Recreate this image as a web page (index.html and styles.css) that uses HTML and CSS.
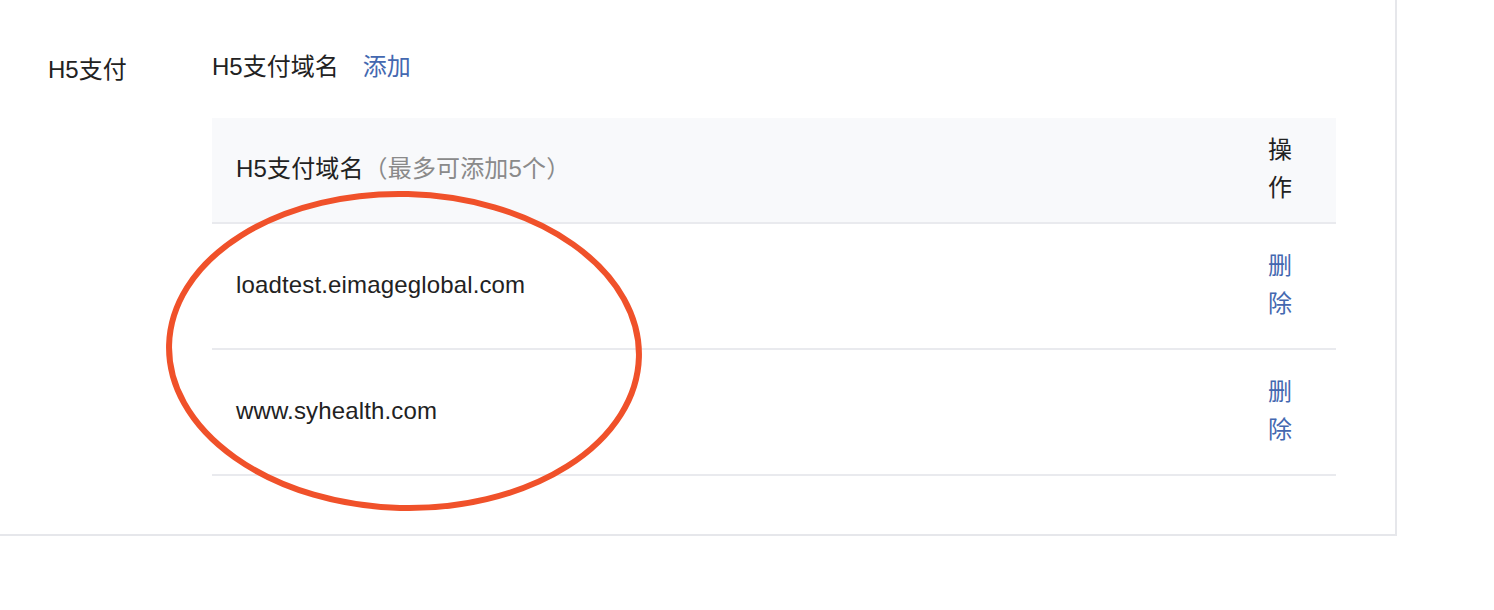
FILE: index.html
```html
<!DOCTYPE html>
<html lang="zh">
<head>
<meta charset="utf-8">
<title>H5支付</title>
<link rel="stylesheet" href="styles.css">
</head>
<body>
<div class="panel">
  <div class="row">
    <div class="label">H5支付</div>
    <div class="content">
      <div class="title-line">
        <span class="title">H5支付域名</span>
        <a class="link add">添加</a>
      </div>
      <table class="domains">
        <colgroup>
          <col class="col-domain">
          <col class="col-op">
        </colgroup>
        <thead>
          <tr>
            <th>H5支付域名<span class="hint">（最多可添加5个）</span></th>
            <th class="op">操作</th>
          </tr>
        </thead>
        <tbody>
          <tr>
            <td>loadtest.eimageglobal.com</td>
            <td class="op"><a class="link">删除</a></td>
          </tr>
          <tr>
            <td>www.syhealth.com</td>
            <td class="op"><a class="link">删除</a></td>
          </tr>
        </tbody>
      </table>
    </div>
  </div>
</div>
<svg class="annotation" width="1494" height="610" viewBox="0 0 1494 610" xmlns="http://www.w3.org/2000/svg">
  <ellipse cx="404" cy="351" rx="235" ry="157" transform="rotate(1.5 404 351)" fill="none" stroke="#f0512a" stroke-width="6"/>
</svg>
</body>
</html>
```

FILE: styles.css
```css
html, body {
  margin: 0;
  padding: 0;
  background: #ffffff;
}

body {
  font-family: "Liberation Sans", "Noto Sans CJK SC", sans-serif;
  font-size: 24px;
  line-height: 38px;
  color: #222222;
  position: relative;
  width: 1494px;
  height: 610px;
  overflow: hidden;
}

.panel {
  width: 1395px;
  border-right: 2px solid #e6e7eb;
  border-bottom: 2px solid #e6e7eb;
  padding: 49px 0 58px;
  box-sizing: content-box;
}

.row {
  display: flex;
}

.label {
  flex: 0 0 212px;
  padding-left: 48px;
  box-sizing: border-box;
  padding-top: 2px;
}

.content {
  flex: 0 0 1124px;
}

.title-line {
  display: flex;
  gap: 24px;
  margin-top: -1px;
}

.link {
  color: #4468b0;
  text-decoration: none;
}

.domains {
  margin-top: 32px;
  width: 1124px;
  border-collapse: collapse;
  table-layout: fixed;
}

.col-op {
  width: 91px;
}

.domains th {
  background: #f8f9fb;
  font-weight: normal;
  text-align: left;
  padding: 13px 24px 15px;
  border-bottom: 2px solid #e9eaee;
  vertical-align: middle;
}

.domains td {
  padding: 23px 24px 25px;
  border-bottom: 2px solid #e9eaee;
  vertical-align: middle;
}

.domains td:first-child,
.domains th:first-child {
  letter-spacing: 0.15px;
}

.domains .op {
  padding-left: 23px;
  padding-right: 25px;
}

.hint {
  color: #8a8a8a;
}

.annotation {
  position: absolute;
  left: 0;
  top: 0;
  pointer-events: none;
}
```
